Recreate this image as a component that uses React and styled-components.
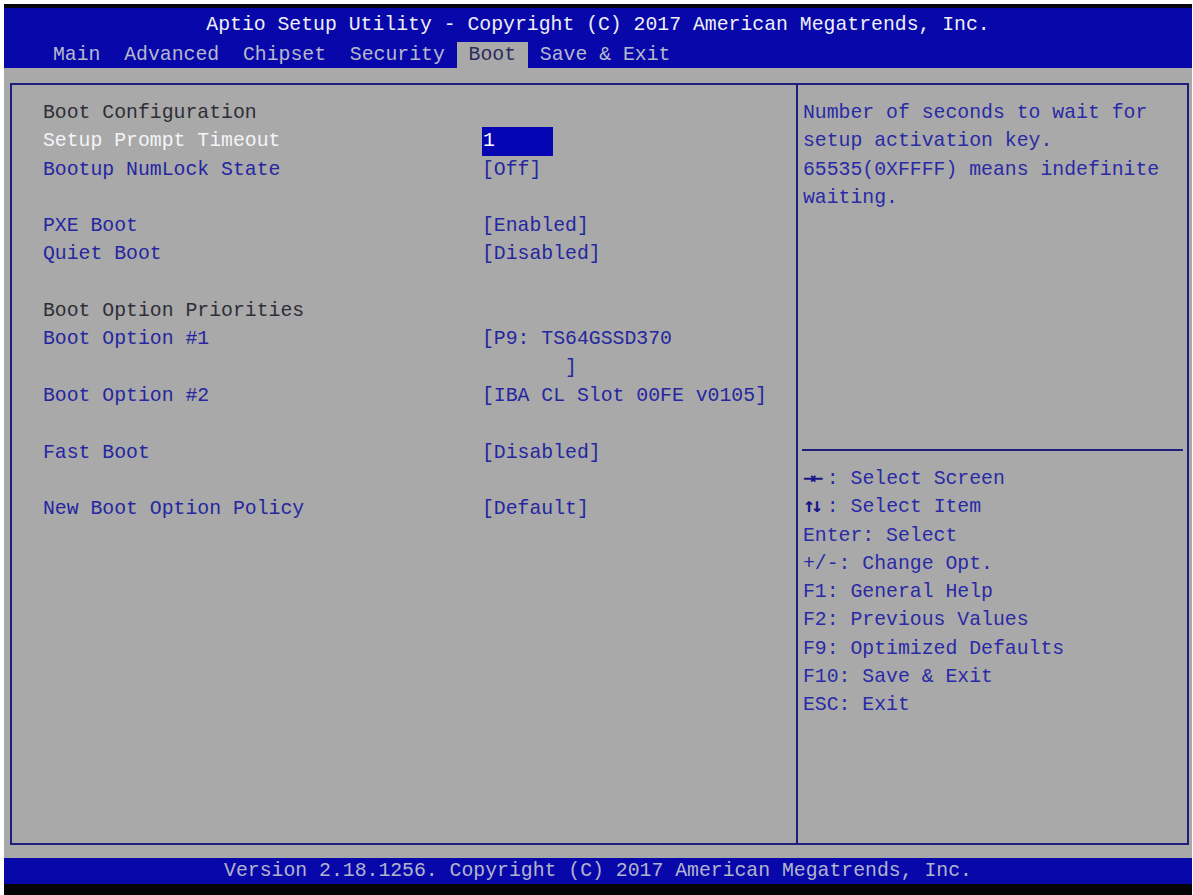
import React from "react";
import styled, { createGlobalStyle } from "styled-components";

const LINE = 28.3;

const GlobalStyle = createGlobalStyle`
  html, body {
    margin: 0;
    padding: 0;
    background: #ffffff;
  }
  body {
    font-family: "Liberation Mono", "DejaVu Sans Mono", monospace;
    font-size: 19.8px;
  }
`;

const Frame = styled.div`
  box-sizing: border-box;
  height: 895px;
  padding: 4px 1px 0 4px;
  background: #ffffff;
`;

const Screen = styled.div`
  height: 100%;
  display: flex;
  flex-direction: column;
  background: #a9a9a9;
`;

const Header = styled.header`
  height: 60px;
  border-top: 4px solid #050510;
  background: #0808aa;
  display: flex;
  flex-direction: column;
`;

const Title = styled.div`
  height: 34px;
  display: flex;
  align-items: center;
  justify-content: center;
  color: #eeeef6;
  white-space: pre;
`;

const TabBar = styled.nav`
  height: 26px;
  display: flex;
  padding-left: 37px;
`;

const Tab = styled.div`
  padding: 0 11.9px;
  display: flex;
  align-items: center;
  white-space: pre;
  color: ${(p) => (p.$active ? "#2c2c5c" : "#b6b8cc")};
  background: ${(p) => (p.$active ? "#a9a9a9" : "transparent")};
`;

const Body = styled.main`
  flex: 1;
  display: flex;
  padding: 15px 3px 13px 6px;
  min-height: 0;
`;

const Panel = styled.section`
  flex: 1;
  display: grid;
  grid-template-columns: 784px 1fr;
  border: 2px solid #1e1e7c;
`;

const LeftPane = styled.div`
  padding: 14px 0 0 31px;
`;

const Row = styled.div`
  display: flex;
  align-items: flex-start;
  min-height: ${LINE}px;
  line-height: ${LINE}px;
`;

const Label = styled.div`
  width: 439px;
  flex: none;
  white-space: pre;
  color: ${(p) =>
    p.$kind === "heading"
      ? "#2e2e36"
      : p.$kind === "selected"
      ? "#f4f4f8"
      : "#2626a0"};
`;

const Value = styled.div`
  white-space: pre;
  color: #2626a0;
`;

const Field = styled.div`
  width: 71px;
  height: ${LINE}px;
  padding-left: 1px;
  box-sizing: border-box;
  background: #0505b4;
  color: #ffffff;
`;

const RightPane = styled.aside`
  border-left: 2px solid #1e1e7c;
  display: flex;
  flex-direction: column;
`;

const HelpTop = styled.div`
  box-sizing: border-box;
  height: 364px;
  padding: 14px 0 0 5px;
`;

const HelpLine = styled.div`
  height: ${LINE}px;
  line-height: ${LINE}px;
  white-space: pre;
  color: #2a2aa6;
`;

const Separator = styled.div`
  height: 2px;
  margin: 0 4px;
  background: #1e1e7c;
`;

const HelpKeys = styled.div`
  padding: 14px 0 0 5px;
`;

const Arrows = styled.span`
  display: inline-block;
  width: 23.8px;
  line-height: 0;
  font-family: "DejaVu Sans Mono", monospace;
  font-size: 20px;
  font-weight: bold;
  letter-spacing: -4px;
  color: #16168a;
`;

const Footer = styled.footer`
  height: 26px;
  border-bottom: 11px solid #050508;
  background: #0808aa;
  color: #b2b4cc;
  display: flex;
  align-items: center;
  justify-content: center;
  white-space: pre;
`;

const tabs = ["Main", "Advanced", "Chipset", "Security", "Boot", "Save & Exit"];

const rows = [
  { label: "Boot Configuration", kind: "heading" },
  { label: "Setup Prompt Timeout", kind: "selected", field: "1" },
  { label: "Bootup NumLock State", value: "[Off]" },
  {},
  { label: "PXE Boot", value: "[Enabled]" },
  { label: "Quiet Boot", value: "[Disabled]" },
  {},
  { label: "Boot Option Priorities", kind: "heading" },
  { label: "Boot Option #1", value: "[P9: TS64GSSD370\n       ]" },
  { label: "Boot Option #2", value: "[IBA CL Slot 00FE v0105]" },
  {},
  { label: "Fast Boot", value: "[Disabled]" },
  {},
  { label: "New Boot Option Policy", value: "[Default]" },
];

const help = [
  "Number of seconds to wait for",
  "setup activation key.",
  "65535(0XFFFF) means indefinite",
  "waiting.",
];

const keys = [
  { arrows: "→←", text: ": Select Screen" },
  { arrows: "↑↓", text: ": Select Item" },
  { text: "Enter: Select" },
  { text: "+/-: Change Opt." },
  { text: "F1: General Help" },
  { text: "F2: Previous Values" },
  { text: "F9: Optimized Defaults" },
  { text: "F10: Save & Exit" },
  { text: "ESC: Exit" },
];

export default function App() {
  return (
    <>
      <GlobalStyle />
      <Frame>
        <Screen>
          <Header>
            <Title>Aptio Setup Utility - Copyright (C) 2017 American Megatrends, Inc.</Title>
            <TabBar>
              {tabs.map((t) => (
                <Tab key={t} $active={t === "Boot"}>
                  {t}
                </Tab>
              ))}
            </TabBar>
          </Header>
          <Body>
            <Panel>
              <LeftPane>
                {rows.map((r, i) => (
                  <Row key={i}>
                    {r.label && <Label $kind={r.kind}>{r.label}</Label>}
                    {r.field && <Field>{r.field}</Field>}
                    {r.value && <Value>{r.value}</Value>}
                  </Row>
                ))}
              </LeftPane>
              <RightPane>
                <HelpTop>
                  {help.map((h) => (
                    <HelpLine key={h}>{h}</HelpLine>
                  ))}
                </HelpTop>
                <Separator />
                <HelpKeys>
                  {keys.map((k) => (
                    <HelpLine key={k.text}>
                      {k.arrows && <Arrows>{k.arrows}</Arrows>}
                      {k.text}
                    </HelpLine>
                  ))}
                </HelpKeys>
              </RightPane>
            </Panel>
          </Body>
          <Footer>Version 2.18.1256. Copyright (C) 2017 American Megatrends, Inc.</Footer>
        </Screen>
      </Frame>
    </>
  );
}
